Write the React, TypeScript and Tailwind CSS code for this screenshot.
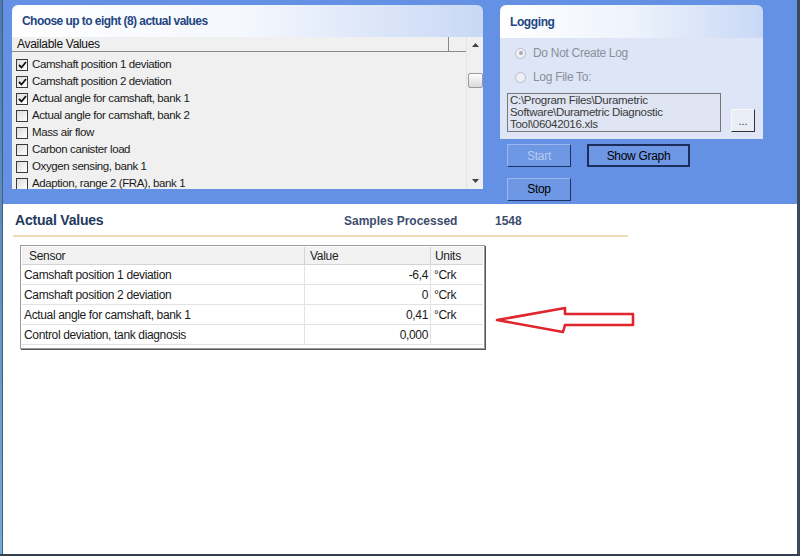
import React from 'react';

const font = { fontFamily: '"Liberation Sans", Arial, sans-serif' };

const available = [
    { label: 'Camshaft position 1 deviation', checked: true },
    { label: 'Camshaft position 2 deviation', checked: true },
    { label: 'Actual angle for camshaft, bank 1', checked: true },
    { label: 'Actual angle for camshaft, bank 2', checked: false },
    { label: 'Mass air flow', checked: false },
    { label: 'Carbon canister load', checked: false },
    { label: 'Oxygen sensing, bank 1', checked: false },
    { label: 'Adaption, range 2 (FRA), bank 1', checked: false },
];

const rows = [
    { sensor: 'Camshaft position 1 deviation', value: '-6,4', units: '°Crk' },
    { sensor: 'Camshaft position 2 deviation', value: '0', units: '°Crk' },
    { sensor: 'Actual angle for camshaft, bank 1', value: '0,41', units: '°Crk' },
    { sensor: 'Control deviation, tank diagnosis', value: '0,000', units: '' },
];

const Check = ({ on }: { on: boolean }) => (
    <span className="w-[12px] h-[12px] border border-[#3a3a3a] bg-gradient-to-br from-[#dcdcdc] to-white flex items-center justify-center shrink-0">
        {on && (
            <svg width="9" height="8" viewBox="0 0 9 8">
                <path d="M1 4 L3.5 6.5 L8 1" fill="none" stroke="#111" strokeWidth="1.8" />
            </svg>
        )}
    </span>
);

const Radio = ({ on }: { on: boolean }) => (
    <span className="w-[11px] h-[11px] rounded-full border border-[#b8bcc8] bg-[#eef0f4] flex items-center justify-center">
        {on && <span className="w-[4px] h-[4px] rounded-full bg-[#a8acb8]" />}
    </span>
);

const WinButton = ({ children, w, disabled, focus }: { children: React.ReactNode; w: string; disabled?: boolean; focus?: boolean }) => (
    <button
        className={`${w} h-[23px] text-[12px] tracking-[-0.3px] border bg-[#6e97e4] ${focus ? 'border-[#1b2d5c] border-2' : 'border-t-[#9db8ee] border-l-[#9db8ee] border-b-[#1e3265] border-r-[#1e3265]'} ${disabled ? 'text-[#b9cbee]' : 'text-black'}`}
    >
        {children}
    </button>
);

export default function App() {
    return (
        <div style={font} className="w-[800px] h-[556px] overflow-hidden flex bg-white border-b-2 border-[#34404e]">
            <div className="w-[3px] bg-gradient-to-b from-[#5479ad] to-[#74abd2] border-r border-[#3c5f86]" />
            <div className="flex-1 flex flex-col">
                {/* top blue band */}
                <div className="h-[204px] bg-[#6591e5] flex gap-[17px] pl-[9px] pt-[5px]">
                    {/* available values panel */}
                    <div className="w-[471px] h-[184px] flex flex-col">
                        <div className="h-[32px] rounded-t-[6px] bg-gradient-to-r from-white via-[#f4f7fd] to-[#c8d8f5] flex items-center pl-[10px]">
                            <span className="text-[12px] font-bold text-[#1f4583] tracking-[-0.55px]">Choose up to eight (8) actual values</span>
                        </div>
                        <div className="flex-1 bg-[#f0f0f0] flex overflow-hidden">
                            <div className="flex-1 flex flex-col">
                                <div className="h-[15px] flex border-b border-[#8a8a8a] bg-[#f0f0f0]">
                                    <div className="w-[437px] border-r border-[#8a8a8a] pl-[5px] text-[12px] leading-[15px] text-[#111] tracking-[-0.3px]">Available Values</div>
                                </div>
                                <div className="flex flex-col pt-[4px] pl-[4px]">
                                    {available.map((a) => (
                                        <div key={a.label} className="h-[17px] flex items-center gap-[4px]">
                                            <Check on={a.checked} />
                                            <span className="text-[11.5px] tracking-[-0.4px] text-[#1a1a1a] whitespace-nowrap">{a.label}</span>
                                        </div>
                                    ))}
                                </div>
                            </div>
                            <div className="w-[17px] border-l border-[#e4e4e4] bg-[#f0f0f0] flex flex-col items-center">
                                <span className="h-[16px] flex items-center">
                                    <svg width="7" height="4" viewBox="0 0 7 4"><path d="M0 4 L3.5 0 L7 4Z" fill="#444" /></svg>
                                </span>
                                <div className="mt-[20px] w-[15px] h-[15px] rounded-[2px] border border-[#9a9a9a] bg-gradient-to-b from-white to-[#d8d8d8]" />
                                <div className="flex-1" />
                                <span className="h-[16px] flex items-center">
                                    <svg width="7" height="4" viewBox="0 0 7 4"><path d="M0 0 L3.5 4 L7 0Z" fill="#444" /></svg>
                                </span>
                            </div>
                        </div>
                    </div>

                    {/* logging + buttons */}
                    <div className="flex flex-col">
                        <div className="w-[263px] h-[134px] flex flex-col">
                            <div className="h-[33px] rounded-t-[6px] bg-gradient-to-r from-white via-[#eef3fc] to-[#c8d8f5] flex items-center pl-[10px]">
                                <span className="text-[12px] font-bold text-[#1f4583] tracking-[-0.4px]">Logging</span>
                            </div>
                            <div className="flex-1 bg-[#dde5f6] flex flex-col pl-[7px]">
                                <div className="flex items-center gap-[7px] pl-[8px] mt-[8px] h-[14px]">
                                    <Radio on />
                                    <span className="text-[12px] tracking-[-0.3px] text-[#8a8f99]">Do Not Create Log</span>
                                </div>
                                <div className="flex items-center gap-[7px] pl-[8px] mt-[10px] h-[14px]">
                                    <Radio on={false} />
                                    <span className="text-[12px] tracking-[-0.3px] text-[#8a8f99]">Log File To:</span>
                                </div>
                                <div className="flex items-end gap-[10px] mt-[9px]">
                                    <div className="w-[214px] h-[39px] border border-[#777] bg-[#dfe5f3] px-[2px] text-[11.5px] leading-[12px] tracking-[-0.3px] text-[#3a3a3a]">
                                        C:\Program Files\Durametric<br />Software\Durametric Diagnostic<br />Tool\06042016.xls
                                    </div>
                                    <button className="w-[24px] h-[23px] bg-[#e9edf6] border border-t-[#f8f8f8] border-l-[#f8f8f8] border-b-[#333] border-r-[#333] text-[11px] leading-[20px] text-[#333]">...</button>
                                </div>
                            </div>
                        </div>
                        <div className="flex gap-[16px] mt-[5px] pl-[7px]">
                            <WinButton w="w-[64px]" disabled>Start</WinButton>
                            <WinButton w="w-[103px]" focus>Show Graph</WinButton>
                        </div>
                        <div className="mt-[9px] pl-[7px]">
                            <WinButton w="w-[64px]">Stop</WinButton>
                        </div>
                    </div>
                </div>

                {/* actual values */}
                <div className="flex-1 relative pl-[10px] pt-[9px]">
                    <div className="w-[615px] h-[24px] flex items-center pb-[7px] border-b-2 border-[#ecdcb8]">
                        <span className="w-[331px] text-[14px] font-bold text-[#1f3a5c] pl-[2px] tracking-[-0.2px]">Actual Values</span>
                        <span className="w-[151px] text-[12px] font-bold text-[#3c4c6c]">Samples Processed</span>
                        <span className="text-[12px] font-bold text-[#3c4c6c]">1548</span>
                    </div>

                    <div className="ml-[7px] mt-[8px] w-[465px] border border-[#9a9a9a] shadow-[1px_1px_0_#555] bg-white p-[1px] pb-[3px]">
                        <div className="flex h-[18px] bg-[#f2f2f2] border-b border-[#d4d4d4] text-[12px] tracking-[-0.3px] text-[#222] leading-[18px]">
                            <div className="w-[283px] border-r border-[#d4d4d4] pl-[7px]">Sensor</div>
                            <div className="w-[126px] border-r border-[#d4d4d4] pl-[5px]">Value</div>
                            <div className="w-[52px] pl-[4px]">Units</div>
                        </div>
                        {rows.map((r) => (
                            <div key={r.sensor} className="flex h-[20px] border-b border-[#e2e2e2] text-[12px] tracking-[-0.35px] text-[#1a1a1a] leading-[20px]">
                                <div className="w-[283px] border-r border-[#e2e2e2] pl-[2px] whitespace-nowrap">{r.sensor}</div>
                                <div className="w-[126px] border-r border-[#e2e2e2] pr-[2px] text-right">{r.value}</div>
                                <div className="w-[52px] pl-[3px]">{r.units}</div>
                            </div>
                        ))}
                    </div>

                    {/* annotation arrow */}
                    <svg className="absolute left-[492px] top-[101px]" width="146" height="32" viewBox="0 0 146 32">
                        <path
                            d="M2 15 L70 3 L70 9 L138 9 L138 20 L70 20 L68 27 Z"
                            fill="none"
                            stroke="#e0262c"
                            strokeWidth="2.6"
                            strokeLinejoin="round"
                        />
                    </svg>
                </div>
            </div>
            <div className="w-[3px] bg-[#3b4a5c]" />
        </div>
    );
}
